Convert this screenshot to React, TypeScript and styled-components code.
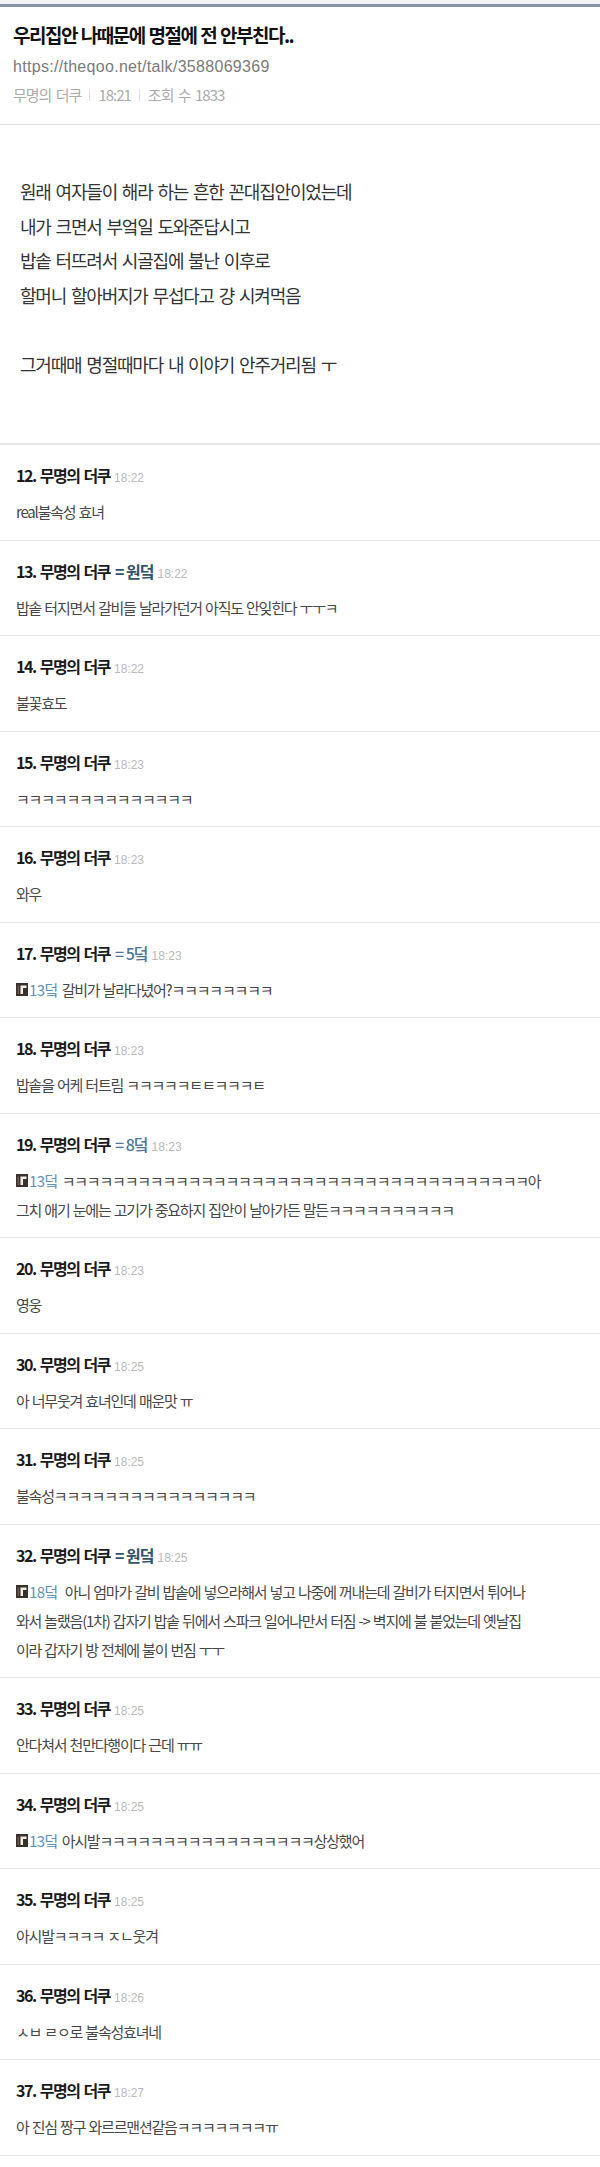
import React from "react";
import styled, { createGlobalStyle } from "styled-components";

const GlobalStyle = createGlobalStyle`
  html, body {
    margin: 0;
    padding: 0;
    background: #ffffff;
  }
  body {
    font-family: "Noto Sans CJK KR", "Noto Sans", sans-serif;
  }
`;

const Page = styled.div`
  width: 600px;
  background: #fff;
`;

const TopBar = styled.div`
  height: 4px;
  background: #f1f3f5;
  border-bottom: 3px solid #8593a4;
`;

const PostHead = styled.header`
  padding: 16px 13px 19px;
  border-bottom: 1px solid #e0e0e0;
`;

const Title = styled.h1`
  margin: 0;
  font-size: 19px;
  line-height: 24px;
  font-weight: 700;
  letter-spacing: -1.5px;
  word-spacing: 1px;
  color: #111;
`;

const Url = styled.div`
  margin-top: 10px;
  font-family: "Liberation Sans", sans-serif;
  font-size: 16px;
  line-height: 20px;
  letter-spacing: 0.3px;
  color: #7a7a7a;
`;

const Meta = styled.div`
  margin-top: 8px;
  display: flex;
  align-items: center;
  gap: 8px;
  font-size: 15px;
  line-height: 20px;
  letter-spacing: -1px;
  word-spacing: 2px;
  color: #ababab;
`;

const Sep = styled.span`
  width: 1px;
  height: 12px;
  background: #dedede;
`;

const PostBody = styled.section`
  padding: 49px 20px 62px;
  font-size: 18px;
  line-height: 34.5px;
  letter-spacing: -1.2px;
  word-spacing: 2px;
  color: #333;
  white-space: pre;
  border-bottom: 2px solid #e6e6e6;
`;

const CommentItem = styled.article`
  padding: 20px 16px 13.5px;
  border-bottom: 1px solid #e3e3e3;
`;

const CommentHead = styled.div`
  display: flex;
  align-items: baseline;
  height: 20px;
  line-height: 20px;
  margin-bottom: 12px;
`;

const Writer = styled.span`
  font-size: 16px;
  font-weight: 700;
  letter-spacing: -1.5px;
  word-spacing: 2px;
  color: #1b1b1b;
`;

const Badge = styled.span<{ $op?: boolean }>`
  margin-left: 5px;
  font-size: 16px;
  font-weight: ${(p) => (p.$op ? 700 : 500)};
  letter-spacing: -1px;
  color: ${(p) => (p.$op ? "#34546b" : "#4f7596")};
`;

const Time = styled.span`
  margin-left: 4px;
  font-family: "Liberation Sans", sans-serif;
  font-size: 12px;
  color: #b9b9b9;
`;

const CommentBody = styled.div`
  font-size: 15px;
  line-height: 29px;
  letter-spacing: -1.2px;
  word-spacing: 1px;
  color: #474747;
`;

const Line = styled.div`
  display: flex;
  align-items: center;
  height: 29px;
  white-space: pre;
`;

const ReplyRef = styled.span`
  display: inline-flex;
  align-items: center;
  margin-right: 4px;
  color: #5f93ba;
  letter-spacing: -0.6px;
  svg {
    margin-right: 1px;
  }
`;

type Comment = {
  no: number;
  time: string;
  badge?: string;
  op?: boolean;
  reply?: string;
  lines: string[];
};

const k = (n: number) => "ㅋ".repeat(n);

const comments: Comment[] = [
  { no: 12, time: "18:22", lines: ["real불속성 효녀"] },
  { no: 13, time: "18:22", badge: "원덬", op: true, lines: ["밥솥 터지면서 갈비들 날라가던거 아직도 안잊힌다 ㅜㅜㅋ"] },
  { no: 14, time: "18:22", lines: ["불꽃효도"] },
  { no: 15, time: "18:23", lines: [k(14)] },
  { no: 16, time: "18:23", lines: ["와우"] },
  { no: 17, time: "18:23", badge: "5덬", reply: "13덬", lines: ["갈비가 날라다녔어?" + k(8)] },
  { no: 18, time: "18:23", lines: ["밥솥을 어케 터트림 ㅋㅋㅋㅋㅋㅌㅌㅋㅋㅋㅌ"] },
  {
    no: 19,
    time: "18:23",
    badge: "8덬",
    reply: "13덬",
    lines: [k(37) + "아", "그치 애기 눈에는 고기가 중요하지 집안이 날아가든 말든" + k(10)],
  },
  { no: 20, time: "18:23", lines: ["영웅"] },
  { no: 30, time: "18:25", lines: ["아 너무웃겨 효녀인데 매운맛 ㅠ"] },
  { no: 31, time: "18:25", lines: ["불속성" + k(16)] },
  {
    no: 32,
    time: "18:25",
    badge: "원덬",
    op: true,
    reply: "18덬",
    lines: [
      " 아니 엄마가 갈비 밥솥에 넣으라해서 넣고 나중에 꺼내는데 갈비가 터지면서 튀어나",
      "와서 놀랬음(1차) 갑자기 밥솥 뒤에서 스파크 일어나만서 터짐 -> 벽지에 불 붙었는데 옛날집",
      "이라 갑자기 방 전체에 불이 번짐 ㅜㅜ",
    ],
  },
  { no: 33, time: "18:25", lines: ["안다쳐서 천만다행이다 근데 ㅠㅠ"] },
  { no: 34, time: "18:25", reply: "13덬", lines: ["아시발" + k(17) + "상상했어"] },
  { no: 35, time: "18:25", lines: ["아시발ㅋㅋㅋㅋ ㅈㄴ웃겨"] },
  { no: 36, time: "18:26", lines: ["ㅅㅂ ㄹㅇ로 불속성효녀네"] },
  { no: 37, time: "18:27", lines: ["아 진심 짱구 와르르맨션같음" + k(7) + "ㅠ"] },
];

function ReplyIcon() {
  return (
    <svg width="12" height="13" viewBox="0 0 12 13">
      <rect x="0" y="0" width="12" height="13" fill="#3a312d" />
      <path d="M4.5 2.5H10.5V5H7V11H4.5Z" fill="#f4efe9" />
      <rect x="1.5" y="2.5" width="1.6" height="8.5" fill="#6b5a4f" />
    </svg>
  );
}

function CommentRow({ c }: { c: Comment }) {
  return (
    <CommentItem>
      <CommentHead>
        <Writer>{c.no}. 무명의 더쿠</Writer>
        {c.badge && <Badge $op={c.op}>= {c.badge}</Badge>}
        <Time>{c.time}</Time>
      </CommentHead>
      <CommentBody>
        {c.lines.map((text, i) => (
          <Line key={i}>
            {i === 0 && c.reply && (
              <ReplyRef>
                <ReplyIcon />
                {c.reply}
              </ReplyRef>
            )}
            <span>{text}</span>
          </Line>
        ))}
      </CommentBody>
    </CommentItem>
  );
}

export default function App() {
  return (
    <Page>
      <GlobalStyle />
      <TopBar />
      <PostHead>
        <Title>우리집안 나때문에 명절에 전 안부친다..</Title>
        <Url>https://theqoo.net/talk/3588069369</Url>
        <Meta>
          <span>무명의 더쿠</span>
          <Sep />
          <span>18:21</span>
          <Sep />
          <span>조회 수 1833</span>
        </Meta>
      </PostHead>
      <PostBody>
        {[
          "원래 여자들이 해라 하는 흔한 꼰대집안이었는데",
          "내가 크면서 부엌일 도와준답시고",
          "밥솥 터뜨려서 시골집에 불난 이후로",
          "할머니 할아버지가 무섭다고 걍 시켜먹음",
          "",
          "그거때매 명절때마다 내 이야기 안주거리됨 ㅜ",
        ].join("\n")}
      </PostBody>
      {comments.map((c) => (
        <CommentRow key={c.no} c={c} />
      ))}
    </Page>
  );
}
